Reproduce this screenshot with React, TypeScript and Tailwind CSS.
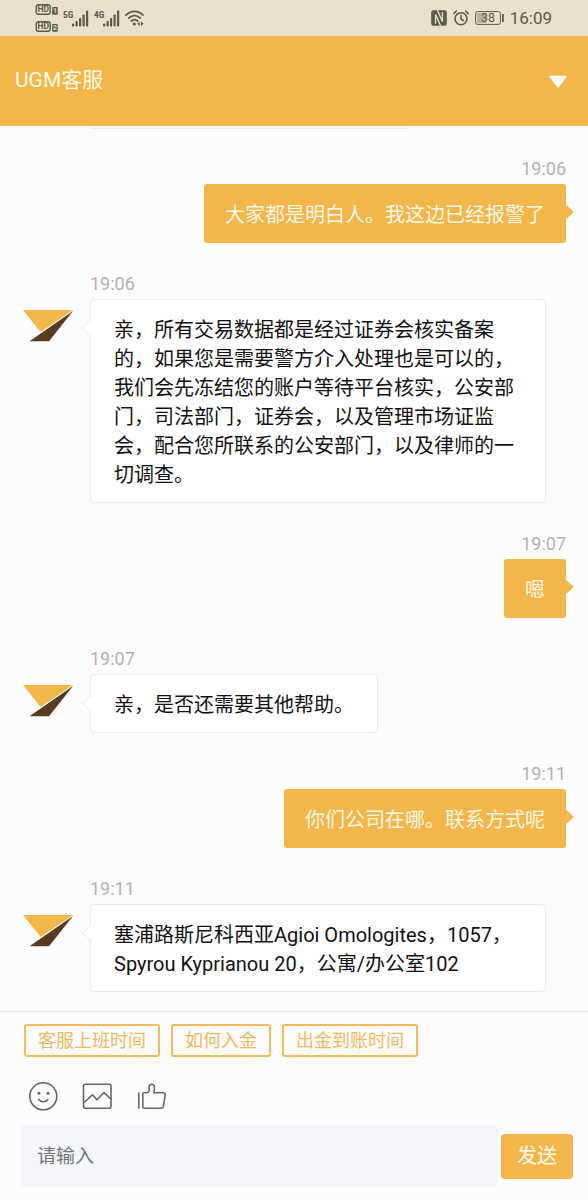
import type { ReactNode } from "react";

type Message = { side: "in" | "out"; time: string; text: string };

const messages: Message[] = [
  { side: "out", time: "19:06", text: "大家都是明白人。我这边已经报警了" },
  {
    side: "in",
    time: "19:06",
    text: "亲，所有交易数据都是经过证券会核实备案的，如果您是需要警方介入处理也是可以的，我们会先冻结您的账户等待平台核实，公安部门，司法部门，证券会，以及管理市场证监会，配合您所联系的公安部门，以及律师的一切调查。",
  },
  { side: "out", time: "19:07", text: "嗯" },
  { side: "in", time: "19:07", text: "亲，是否还需要其他帮助。" },
  { side: "out", time: "19:11", text: "你们公司在哪。联系方式呢" },
  {
    side: "in",
    time: "19:11",
    text: "塞浦路斯尼科西亚Agioi Omologites，1057，Spyrou Kyprianou 20，公寓/办公室102",
  },
];

const quickReplies = ["客服上班时间", "如何入金", "出金到账时间"];

function HdBadge({ sim }: { sim: string }) {
  return (
    <svg width="23" height="11" viewBox="0 0 23 11" aria-hidden="true">
      <rect x="1.200" y="0.700" width="14" height="9.600" rx="2.200" fill="none" stroke="#5c5a4b" strokeWidth="1.400" />
      <text x="8.200" y="8.400" textAnchor="middle" fontSize="8.500" fontWeight="700" fill="#5c5a4b">HD</text>
      <rect x="17.200" y="3" width="5.600" height="7.800" rx="1" fill="#5c5a4b" />
      <text x="20" y="9.400" textAnchor="middle" fontSize="7" fontWeight="700" fill="#e6e1c8">{sim}</text>
    </svg>
  );
}

function Signal({ label }: { label: string }) {
  return (
    <svg width="26" height="18" viewBox="0 0 26 18" aria-hidden="true" fill="#5c5a4b">
      <text x="0" y="8.500" fontSize="9.500" fontWeight="700" fontFamily="'Liberation Sans Narrow', 'Roboto Condensed', Roboto, sans-serif">{label}</text>
      <rect x="9" y="14.500" width="2.200" height="3" rx="0.800" />
      <rect x="12.500" y="12" width="2.200" height="5.500" rx="0.800" />
      <rect x="16" y="9" width="2.200" height="8.500" rx="0.800" />
      <rect x="19.500" y="5.500" width="2.200" height="12" rx="0.800" />
      <rect x="23" y="1.500" width="2.200" height="16" rx="0.800" />
    </svg>
  );
}

function Wifi() {
  return (
    <svg width="19" height="16" viewBox="0 0 19 16" aria-hidden="true" fill="none" stroke="#5c5a4b" strokeWidth="1.700" strokeLinecap="round">
      <path d="M1 5.200C5.800 .1 13.200 .1 18 5.200" />
      <path d="M3.700 8.200C7.200 4.700 11.800 4.700 15.300 8.200" />
      <path d="M6.400 11C8.400 9.200 10.600 9.200 12.600 11" />
      <circle cx="9.300" cy="14" r="1.600" fill="#5c5a4b" stroke="none" />
      <path d="M14.700 11.500v4.400l-2.500-2.200zM16 11.500v4.400l2.500-2.200z" fill="#5c5a4b" stroke="none" />
    </svg>
  );
}

function Nfc() {
  return (
    <svg width="16" height="16" viewBox="0 0 16 16" aria-hidden="true">
      <rect x="0.200" y="0.200" width="15.600" height="15.600" rx="2" fill="#5c5a4b" />
      <path d="M4.600 13.800V4.600L9.600 15.800M11.400 2.200V11.400L6.400 .2" stroke="#e6e1c8" strokeWidth="1.300" fill="none" />
    </svg>
  );
}

function Alarm() {
  return (
    <svg width="16" height="16" viewBox="0 0 16 16" aria-hidden="true" fill="none" stroke="#5c5a4b" strokeWidth="1.600" strokeLinecap="round" strokeLinejoin="round">
      <circle cx="8" cy="8.800" r="6" />
      <path d="M8 5.500v3.700l2.500 1.300M.9 3.400L3.300 1M15.100 3.400L12.700 1" />
    </svg>
  );
}

function Battery() {
  return (
    <svg width="29" height="14" viewBox="0 0 29 14" aria-hidden="true">
      <rect x="0.600" y="0.600" width="24.800" height="12.800" rx="2" fill="none" stroke="#5c5a4b" strokeWidth="1" />
      <rect x="2" y="2" width="9" height="10" fill="#b5b19c" />
      <rect x="27" y="3" width="1.800" height="8" rx="0.600" fill="#5c5a4b" />
      <text x="13" y="11.400" textAnchor="middle" fontSize="12.500" fill="#5c5a4b">38</text>
    </svg>
  );
}

function Logo() {
  return (
    <svg className="mt-[11px] shrink-0" width="50" height="32" viewBox="0 0 50 32" role="img" aria-label="UGM">
      <path d="M0 0H50L17.500 22z" fill="#f3b64a" />
      <path d="M50 1L6.500 31.300H26z" fill="#5b3a22" />
    </svg>
  );
}

function Incoming({ time, text }: { time: string; text: string }) {
  return (
    <div className="flex items-start gap-[17px] pr-5">
      <div className="pt-[27px]">
        <Logo />
      </div>
      <div className="flex min-w-0 flex-1 flex-col items-start gap-[3px]">
        <time className="text-lg leading-6 text-[#b2b2b2]">{time}</time>
        <div className="relative rounded-[4px] border border-[#ececec] bg-white px-[23px] pt-4 pb-3 text-xl leading-[29px] text-[#111]">
          <svg className="absolute top-[18px] -left-[10px]" width="11" height="20" viewBox="0 0 11 20" aria-hidden="true">
            <path d="M11 1.500L1 10l10 8.500" fill="#fff" stroke="#ececec" />
          </svg>
          {text}
        </div>
      </div>
    </div>
  );
}

function Outgoing({ time, text }: { time: string; text: string }) {
  return (
    <div className="flex flex-col items-end gap-[3px]">
      <time className="text-lg leading-6 text-[#b2b2b2]">{time}</time>
      <div className="relative rounded-[3px] bg-[#f3b64a] px-[21px] pt-[17px] pb-[13px] text-xl leading-[29px] text-[#fff9e6]">
        {text}
        <svg className="absolute top-5 -right-2" width="9" height="16" viewBox="0 0 9 16" aria-hidden="true">
          <path d="M0 0L9 8L0 16z" fill="#f3b64a" />
        </svg>
      </div>
    </div>
  );
}

function ToolButton({ label, children }: { label: string; children: ReactNode }) {
  return (
    <button type="button" aria-label={label} className="flex size-[30px] items-center justify-center">
      <svg width="30" height="30" viewBox="0 0 30 30" fill="none" stroke="#666" strokeWidth="1.600" strokeLinecap="round" strokeLinejoin="round" aria-hidden="true">
        {children}
      </svg>
    </button>
  );
}

export default function App() {
  return (
    <div className="flex min-h-screen flex-col bg-[#fcfcfc] font-[Roboto,'Noto_Sans_CJK_SC',sans-serif]">
      <div className="flex h-9 items-center justify-between bg-[#e6e1c8] pr-9 pl-[35px]">
        <div className="flex items-center gap-[5px]">
          <div className="flex flex-col gap-[6px]">
            <HdBadge sim="1" />
            <HdBadge sim="2" />
          </div>
          <Signal label="5G" />
          <Signal label="4G" />
          <Wifi />
        </div>
        <div className="flex items-center gap-[6px] text-[#5c5a4b]">
          <Nfc />
          <Alarm />
          <Battery />
          <span className="text-[17px] leading-6">16:09</span>
        </div>
      </div>

      <header className="flex h-[90px] items-center justify-between bg-[#f3b64a] pr-5 pl-[15px]">
        <h1 className="pb-[2px] text-[21px] leading-7 text-[#fffbe6]">UGM客服</h1>
        <button type="button" aria-label="收起" className="pt-[2px]">
          <svg width="20" height="14" viewBox="0 0 20 14" aria-hidden="true">
            <path d="M2 1.500H18L10 12z" fill="#fff" stroke="#fff" strokeWidth="1.500" strokeLinejoin="round" />
          </svg>
        </button>
      </header>

      <main className="flex-1 pr-[22px] pb-[19px] pl-[23px]">
        <div className="ml-[67px] h-[3px] w-80 rounded-b-[4px] border-b border-[#ececec] bg-white" />
        <div className="flex flex-col gap-[29px] pt-7">
          {messages.map((m, i) =>
            m.side === "in" ? (
              <Incoming key={i} time={m.time} text={m.text} />
            ) : (
              <Outgoing key={i} time={m.time} text={m.text} />
            )
          )}
        </div>
      </main>

      <footer className="border-t border-[#e6e8ea] pt-3 pb-[14px]">
        <div className="flex flex-wrap gap-[11px] px-6">
          {quickReplies.map((q) => (
            <button key={q} type="button" className="rounded-[3px] border-2 border-[#f1bb5c] px-3 pt-[2px] pb-px text-lg leading-[26px] text-[#efb95f]">
              {q}
            </button>
          ))}
        </div>
        <div className="flex gap-6 px-7 pt-6 pb-[15px]">
          <ToolButton label="表情">
            <circle cx="15.300" cy="15.300" r="13.500" />
            <circle cx="11" cy="12.300" r="1.500" fill="#666" stroke="none" />
            <circle cx="20" cy="12.300" r="1.500" fill="#666" stroke="none" />
            <path d="M10.800 18.500C12.800 21.500 17.800 21.500 19.800 18.500" />
          </ToolButton>
          <ToolButton label="图片">
            <rect x="1.500" y="3.300" width="27.500" height="24" rx="2" />
            <path d="M2 21.500L10.500 13.800L15 18.800L22 11.500L28.500 17.800" />
          </ToolButton>
          <ToolButton label="点赞">
            <path d="M2.800 12V27M6.800 13Q6.800 11.700 8.300 11.700H10.500C13 11.700 13.500 9.500 13.200 6C13 2.300 18.300 2.300 18.500 6.200C18.600 8.500 18 10.300 17.800 11.700H26.800Q29.500 11.700 29.100 14.200L27.500 25.200Q27.100 27.200 25.300 27.200H8.300Q6.800 27.200 6.800 25.700z" />
          </ToolButton>
        </div>
        <div className="flex items-center gap-[3px] pr-[15px] pl-[21px]">
          <input
            type="text"
            aria-label="请输入"
            placeholder="请输入"
            className="h-[60px] min-w-0 flex-1 bg-[#f3f5f9] px-4 text-[19px] text-[#333] outline-none placeholder:text-[#757575]"
          />
          <button type="button" className="h-[45px] w-[72px] rounded-[4px] bg-[#f3b64a] text-xl text-[#fffdf0]">
            发送
          </button>
        </div>
      </footer>
    </div>
  );
}
